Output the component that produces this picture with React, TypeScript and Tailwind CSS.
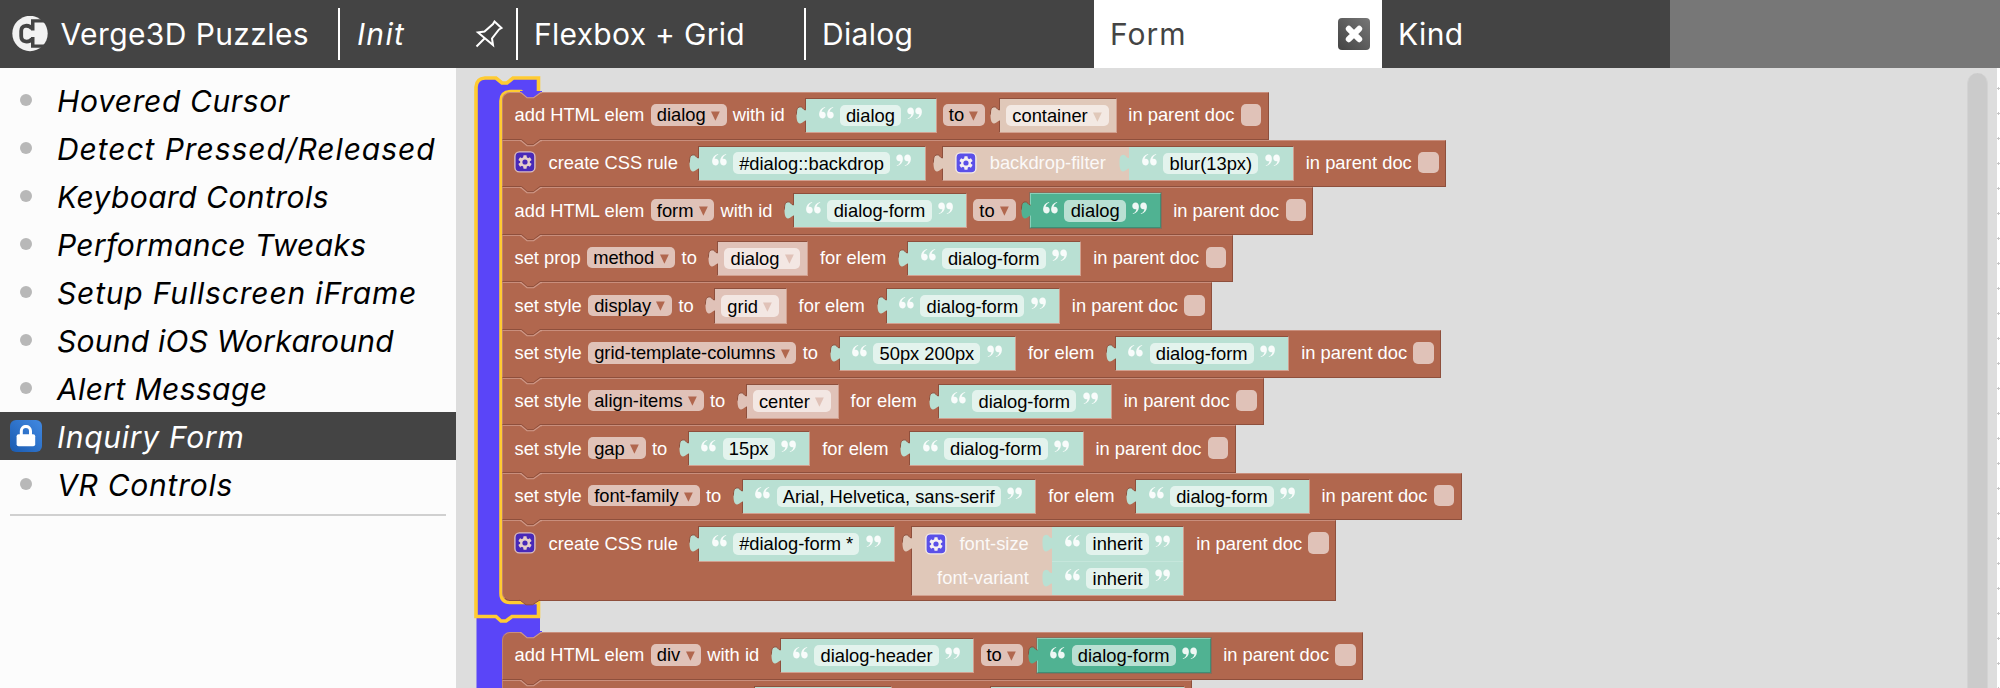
import React from "react";

type Tone = "mint" | "green" | "cream" | "pink";

const bodyTone: Record<Tone, string> = {
  mint: "bg-[#b9e0d3] border-t-[#8e4f3c] border-l-[#8e4f3c] border-r-[#d2a08f] border-b-[#d2a08f]",
  green: "bg-[#50b292] border-t-[#8ad0b9] border-l-[#8ad0b9] border-r-[#3f8e75] border-b-[#3f8e75] outline outline-1 outline-[#8e6a58]",
  cream: "bg-[#e0c8b9] border-t-[#8e4f3c] border-l-[#8e4f3c] border-r-[#d2a08f] border-b-[#d2a08f]",
  pink: "bg-[#e0c2b8] border-t-[#8e4f3c] border-l-[#8e4f3c] border-r-[#d2a08f] border-b-[#d2a08f]",
};

const fillTone: Record<Tone, string> = {
  mint: "fill-[#b9e0d3]",
  green: "fill-[#50b292]",
  cream: "fill-[#e0c8b9]",
  pink: "fill-[#e0c2b8]",
};

function Tab({ tone, plain }: { tone: Tone; plain?: boolean }) {
  return (
    <svg className={`absolute -left-[10px] top-[5px] ${fillTone[tone]}`} width="11" height="21" viewBox="0 0 11 21">
      <path d="M11 6 L9.5 6 C7 6 7 2.5 4 2.8 C0.5 3.5 0.5 7 0.5 10.5 C0.5 15 1 19 4 19.6 C6 19.8 7.5 17 9.5 16.6 L11 16.6 Z" />
      {!plain && <path d="M9.5 6 C7 6 7 2.5 4 2.8 C0.5 3.5 0.5 7 0.5 10.5" fill="none" stroke="#8e4f3c" strokeWidth="1" />}
    </svg>
  );
}

function Quote({ close }: { close?: boolean }) {
  return (
    <svg className={`mb-[6px] shrink-0 fill-white/90 ${close ? "rotate-180" : ""}`} width="15" height="12" viewBox="0 0 15 12">
      <path d="M6.3 0.4 C3.6 1.7 2.6 3.6 2.7 5.1 C3 4.9 3.4 4.8 3.8 4.8 C5.6 4.9 6.7 6.2 6.7 8 C6.7 10 5.3 11.5 3.5 11.5 C1.2 11.5 0.1 9.7 0.1 7.1 C0.2 3.6 2.4 1 6 0 Z" />
      <path d="M14.3 0.4 C11.6 1.7 10.6 3.6 10.7 5.1 C11 4.9 11.4 4.8 11.8 4.8 C13.6 4.9 14.7 6.2 14.7 8 C14.7 10 13.3 11.5 11.5 11.5 C9.2 11.5 8.1 9.7 8.1 7.1 C8.2 3.6 10.4 1 14 0 Z" />
    </svg>
  );
}

function Arrow({ className }: { className: string }) {
  return (
    <svg className={`mt-[2px] ml-[5.3px] mr-[0.7px] shrink-0 ${className}`} width="9" height="10" viewBox="0 0 9 10">
      <path d="M0 0.4 H8.8 L4.4 9.8 Z" />
    </svg>
  );
}

function Label({ children, className = "" }: { children: React.ReactNode; className?: string }) {
  return <span className={`mb-[1.5px] leading-[21px] text-white ${className}`}>{children}</span>;
}

function Drop({ children }: { children: React.ReactNode }) {
  return (
    <span className="mb-[1.5px] flex h-[21.5px] items-center rounded-[5px] bg-[#e0c2b8] px-[6px] leading-[21px] text-black">
      {children}
      <Arrow className="fill-[#b1674e]" />
    </span>
  );
}

function Str({ children, tone = "mint", className = "" }: { children: React.ReactNode; tone?: Tone; className?: string }) {
  return (
    <span className={`relative flex h-[35.3px] items-center border pl-[12.5px] pr-[13.5px] ${bodyTone[tone]} ${className}`}>
      <Tab tone={tone} />
      <Quote />
      <span
        className={`mx-[6.2px] flex h-[21.5px] items-center rounded-[5px] px-[6.2px] leading-[21px] text-black ${
          tone === "green" ? "bg-[#b9e0d3]" : "bg-[#e3f3ed]"
        }`}
      >
        {children}
      </span>
      <Quote close />
    </span>
  );
}

function Pick({ children, tone = "pink" }: { children: React.ReactNode; tone?: Tone }) {
  return (
    <span className={`relative flex h-[35.3px] items-center border pl-[6px] pr-[6.9px] ${bodyTone[tone]}`}>
      <Tab tone={tone} />
      <span
        className={`flex h-[21.5px] items-center rounded-[5px] px-[6px] leading-[21px] text-black ${
          tone === "cream" ? "bg-[#f3e9e3]" : "bg-[#f3e7e3]"
        }`}
      >
        {children}
        <Arrow className={tone === "cream" ? "fill-[#e0c8b9]" : "fill-[#e0c2b8]"} />
      </span>
    </span>
  );
}

function Gear({ light }: { light?: boolean }) {
  return (
    <svg className={`shrink-0 ${light ? "" : "mb-[2px] -ml-[0.5px]"}`} width="22" height="22" viewBox="0 0 22 22">
      <rect x="0.9" y="0.9" width="20" height="20" rx="4.5" fill={light ? "#5b50e8" : "#4829b8"} stroke={light ? "#f3ebe8" : "#d9bcc0"} strokeWidth="1.4" />
      <g fill={light ? "#f6f0f2" : "#e6cfc9"}>
        <circle cx="11" cy="11" r="4.9" />
        {[0, 60, 120].map((a) => (
          <rect key={a} x="9.3" y="4.3" width="3.4" height="13.4" rx="0.6" transform={`rotate(${a} 11 11)`} />
        ))}
      </g>
      <circle cx="11" cy="11" r="2.6" fill={light ? "#5b50e8" : "#4829b8"} />
    </svg>
  );
}

function Doc() {
  return (
    <>
      <Label className="ml-[11.8px]">in parent doc</Label>
      <span className="mb-[1.5px] ml-[6.3px] h-[21.5px] w-[20.7px] rounded-[5px] bg-[#e0c2b8]" />
    </>
  );
}

function Row({ children, first, last, className = "" }: { children: React.ReactNode; first?: boolean; last?: boolean; className?: string }) {
  return (
    <div
      className={`relative flex w-fit items-start whitespace-nowrap border-t border-r border-b border-l border-t-[#c98e7c] border-l-[#c08270] border-r-[#8e4f3c] border-b-[#8e4f3c] bg-[#b1674e] pl-[11.5px] pr-[6.2px] ${
        first ? "rounded-tl-[8px]" : ""
      } ${last ? "rounded-bl-[8px]" : ""} ${className || "h-[47.6px]"}`}
    >
      <svg className="absolute left-[17px] -top-[2px]" width="22" height="9" viewBox="0 0 22 9">
        <path d="M0.8 0 V1.5 L7 6.6 H13.5 L20.8 1.5 V0 Z" fill={first ? "#5a45f8" : "#b1674e"} />
        <path d="M0 0.5 H1.6 L7.4 5.6 H13.4 L20 0.5 H22" fill="none" stroke={first ? "#5a45f8" : "#8e4f3c"} strokeWidth="1" />
        <path d="M0 1.6 H1 L7 6.7 H13.6 L20.8 1.6 H22" fill="none" stroke="#cf9a8a" strokeWidth="1.1" />
      </svg>
      {children}
    </div>
  );
}

function Line({ children }: { children: React.ReactNode }) {
  return <div className="mt-[5px] flex h-[35.3px] items-center">{children}</div>;
}

function AddElem({ elem, id, children, first }: { elem: string; id: string; children: React.ReactNode; first?: boolean }) {
  return (
    <Row first={first}>
      <Line>
        <Label>add HTML elem</Label>
        <span className="w-[6.6px]" />
        <Drop>{elem}</Drop>
        <Label className="ml-[6px]">with id</Label>
        <Str className="ml-[20.4px]">{id}</Str>
        <span className="w-[6.1px]" />
        <Drop>to</Drop>
        <span className="w-[14.2px]" />
        {children}
        <Doc />
      </Line>
    </Row>
  );
}

function SetRow({ kind, name, children }: { kind: string; name: string; children: React.ReactNode }) {
  return (
    <Row>
      <Line>
        <Label>{kind}</Label>
        <span className="w-[6.4px]" />
        <Drop>{name}</Drop>
        <Label className="mr-[20.6px] ml-[6.3px]">to</Label>
        {children}
        <Label className="ml-[11.8px]">for elem</Label>
        <Str className="ml-[20.8px]">dialog-form</Str>
        <Doc />
      </Line>
    </Row>
  );
}

function Attr({ name, value, icon, top }: { name: string; value: string; icon?: boolean; top?: boolean }) {
  return (
    <span className="flex items-center justify-end">
      {icon && <Gear light />}
      <Label className="mr-[23.4px] ml-[12.8px] opacity-90">{name}</Label>
      <span className={`relative flex items-center bg-[#b9e0d3] pl-[13px] pr-[13.5px] ${top ? "h-[34.2px] border-b border-[#c5e6db]" : "h-[33.6px]"}`}>
        <Tab tone="mint" plain />
        <Quote />
        <span className="mx-[6.2px] flex h-[21.5px] items-center rounded-[5px] bg-[#e3f3ed] px-[6.2px] leading-[21px] text-black">{value}</span>
        <Quote close />
      </span>
    </span>
  );
}

function CssRule({ selector, attrs, tall }: { selector: string; attrs: [string, string][]; tall?: boolean }) {
  return (
    <Row last={tall} className={tall ? "h-[80.5px]" : "h-[47.6px]"}>
      <div className="mt-[5px] flex items-start">
        <div className="flex h-[35.3px] items-center">
          <Gear />
          <Label className="ml-[12.5px]">create CSS rule</Label>
          <Str className="ml-[20.4px]">{selector}</Str>
        </div>
        <div className={`relative ml-[16.2px] flex flex-col border pl-[12px] ${bodyTone.cream}`}>
          <Tab tone="cream" />
          {attrs.map(([n, v], i) => (
            <Attr key={n} name={n} value={v} icon={i === 0} top={i === 0 && attrs.length > 1} />
          ))}
        </div>
        <div className="flex h-[35.3px] items-center">
          <Doc />
        </div>
      </div>
    </Row>
  );
}

const notes: [string, string][] = [
  ["Hovered Cursor", "tracking-[0.6px]"],
  ["Detect Pressed/Released", "tracking-[0.93px]"],
  ["Keyboard Controls", "tracking-[0.44px]"],
  ["Performance Tweaks", "tracking-[0.36px]"],
  ["Setup Fullscreen iFrame", "tracking-[0.82px]"],
  ["Sound iOS Workaround", "tracking-[0.24px]"],
  ["Alert Message", "tracking-[0.38px]"],
  ["Inquiry Form", "tracking-[0.72px]"],
  ["VR Controls", "tracking-[0.75px]"],
];

function Sidebar() {
  return (
    <aside className="w-[456px] shrink-0 bg-[#fcfcfc] pt-[8px]">
      {notes.map(([name, tracking]) => {
        const on = name === "Inquiry Form";
        return (
          <div key={name} className={`flex h-[48px] items-center pl-[10px] ${on ? "bg-[#444] text-white" : "text-black"}`}>
            <span className="flex w-[47px] shrink-0 items-center">
              {on ? (
                <span className="flex size-[32px] items-center justify-center rounded-[6px] bg-linear-to-tr from-[#1a5bb0] to-[#4189e2]">
                  <svg width="20" height="22" viewBox="0 0 20 22">
                    <path d="M5.3 10 V6 a4.6 4.6 0 0 1 9.2 0 V10" fill="none" stroke="white" strokeWidth="3" />
                    <rect x="0.6" y="9.3" width="18.6" height="12" rx="2" fill="white" />
                  </svg>
                </span>
              ) : (
                <span className="ml-[10px] size-[12px] rounded-full bg-[#b8b8b8]" />
              )}
            </span>
            <span className={`pt-[2px] text-[30px] leading-[46px] whitespace-nowrap italic ${tracking}`}>{name}</span>
          </div>
        );
      })}
      <div className="mx-[10px] mt-[6px] h-[2px] bg-[#d0d0d0]" />
    </aside>
  );
}

function Header() {
  return (
    <header className="flex h-[68px] shrink-0 items-center bg-[#777] text-[30px] whitespace-nowrap text-white">
      <div className="flex h-full w-[338px] items-center bg-[#444] pl-[12px]">
        <svg width="36" height="36" viewBox="0 0 36 36">
          <circle cx="18" cy="17.5" r="17.7" fill="#f2f2f2" />
          <path d="M19 3.3 H34 V0 H36 V9 L33 6.6 H22.5 V14.5 H19 Z M19 31.7 H34 V36 H36 V26 L33 28.5 H22.5 V21 H19 Z" fill="#444" />
          <path d="M20 12.5 C17 8.5 9.2 8.5 9.2 15 V20 C9.2 26.8 17 26.8 20 22.8" fill="none" stroke="#444" strokeWidth="3.8" />
        </svg>
        <span className="ml-[12.5px] tracking-[0.4px]">Verge3D Puzzles</span>
      </div>
      <div className="flex h-full w-[178px] items-center bg-[#444]">
        <span className="h-[52px] w-[2px] bg-white" />
        <span className="ml-[17px] grow tracking-[1.3px] italic">Init</span>
        <svg className="mr-[13px]" width="28" height="28" viewBox="0 0 28 28" fill="none" stroke="white" strokeWidth="2">
          <path d="M19.5 1.5 L26.5 8 L24 9.5 L17 18.5 L18 25 L3 12.5 L9.5 11.5 L18 4 Z M9.5 18.5 L1.5 26.5" />
        </svg>
      </div>
      <div className="flex h-full w-[288px] items-center bg-[#444]">
        <span className="h-[52px] w-[2px] bg-white" />
        <span className="ml-[16px] tracking-[0.3px]">Flexbox + Grid</span>
      </div>
      <div className="flex h-full w-[290px] items-center bg-[#444]">
        <span className="h-[52px] w-[2px] bg-white" />
        <span className="ml-[16px] tracking-[0.3px]">Dialog</span>
      </div>
      <div className="flex h-full w-[288px] items-center justify-between bg-white pr-[12px] pl-[16px] text-[#444]">
        <span className="tracking-[1px]">Form</span>
        <span className="flex size-[32px] items-center justify-center rounded-[4px] bg-linear-to-tr from-[#444] to-[#777]">
          <svg width="18" height="18" viewBox="0 0 18 18">
            <path d="M3.8 3.8 L14.2 14.2 M14.2 3.8 L3.8 14.2" stroke="white" strokeWidth="6" strokeLinecap="round" />
          </svg>
        </span>
      </div>
      <div className="flex h-full w-[288px] items-center bg-[#444] pl-[16px]">
        <span className="tracking-[0.4px]">Kind</span>
      </div>
    </header>
  );
}

const gridMarks = Array.from({ length: 25 }, (_, i) => 20.5 + i * 25);

export default function App() {
  return (
    <div className="flex h-[688px] w-[2000px] flex-col overflow-hidden font-['Inter',sans-serif]">
      <Header />
      <div className="flex min-h-0 grow">
        <Sidebar />
        <main className="flex min-w-0 grow overflow-hidden bg-[#ddd]">
          <div className="relative min-w-0 grow pt-[24px] pl-[46px] font-['Liberation_Sans',Arial,sans-serif] text-[18.33px]">
            <svg className="absolute top-0 left-0" width="100" height="620" viewBox="456 68 100 620">
              <path
                d="M476.5 617.5 H495 L501 622 H507 L512.5 617.5 H540 V631 H533 L528 637 H510 Q502 638 502 648 V688 H476.5 Z"
                fill="#5a45f8"
              />
              <path
                d="M476 616.5 V87 Q476.5 78.5 485 78 H496 L502 83 H507 L513 78 H538.5 V91.5 L532 97 H528 L521 91.5 H511 Q501 92 501 101 V593 Q501 602.5 511 602.5 H538.5 V616.5 H512 L506 621 H501 L496 616.5 Z"
                fill="#5a45f8"
                stroke="#ffcb32"
                strokeWidth="3.6"
              />
            </svg>
            <div className="relative">
              <AddElem first elem="dialog" id="dialog">
                <Pick tone="cream">container</Pick>
              </AddElem>
              <CssRule selector="#dialog::backdrop" attrs={[["backdrop-filter", "blur(13px)"]]} />
              <AddElem elem="form" id="dialog-form">
                <Str tone="green">dialog</Str>
              </AddElem>
              <SetRow kind="set prop" name="method">
                <Pick>dialog</Pick>
              </SetRow>
              <SetRow kind="set style" name="display">
                <Pick>grid</Pick>
              </SetRow>
              <SetRow kind="set style" name="grid-template-columns">
                <Str>50px 200px</Str>
              </SetRow>
              <SetRow kind="set style" name="align-items">
                <Pick>center</Pick>
              </SetRow>
              <SetRow kind="set style" name="gap">
                <Str>15px</Str>
              </SetRow>
              <SetRow kind="set style" name="font-family">
                <Str>Arial, Helvetica, sans-serif</Str>
              </SetRow>
              <CssRule
                tall
                selector="#dialog-form *"
                attrs={[
                  ["font-size", "inherit"],
                  ["font-variant", "inherit"],
                ]}
              />
              <svg className="absolute bottom-[-5px] left-[17px]" width="22" height="7" viewBox="0 0 22 7">
                <path d="M0.8 0 V1 L7 5.8 H13.5 L20.8 1 V0 Z" fill="#b1674e" />
                <path d="M0.8 1 L7 5.8 H13.5 L20.8 1" fill="none" stroke="#8e4f3c" strokeWidth="1" />
              </svg>
            </div>
            <div className="relative mt-[31.1px]">
              <AddElem first elem="div" id="dialog-header">
                <Str tone="green">dialog-form</Str>
              </AddElem>
              <Row className="h-[48px] w-[835px]">
                <div className="mt-[5.5px] flex">
                  <span className={`ml-[239px] h-[35px] w-[138px] border ${bodyTone.mint}`} />
                  <span className={`ml-[98px] h-[35px] w-[195px] border ${bodyTone.mint}`} />
                </div>
              </Row>
            </div>
          </div>
          <div className="mt-[5px] mr-[9px] w-[21px] shrink-0 rounded-t-full border-x border-[#d3d3d3] bg-[#cbcbcb]" />
        </main>
        <svg className="shrink-0 bg-white" width="3" height="620" viewBox="0 0 3 620">
          {gridMarks.map((y) => (
            <path key={y} d={`M0 ${y} H3 M1.5 ${y - 1.5} V${y + 1.5}`} stroke="#c8c8c8" strokeWidth="1" />
          ))}
        </svg>
      </div>
    </div>
  );
}
